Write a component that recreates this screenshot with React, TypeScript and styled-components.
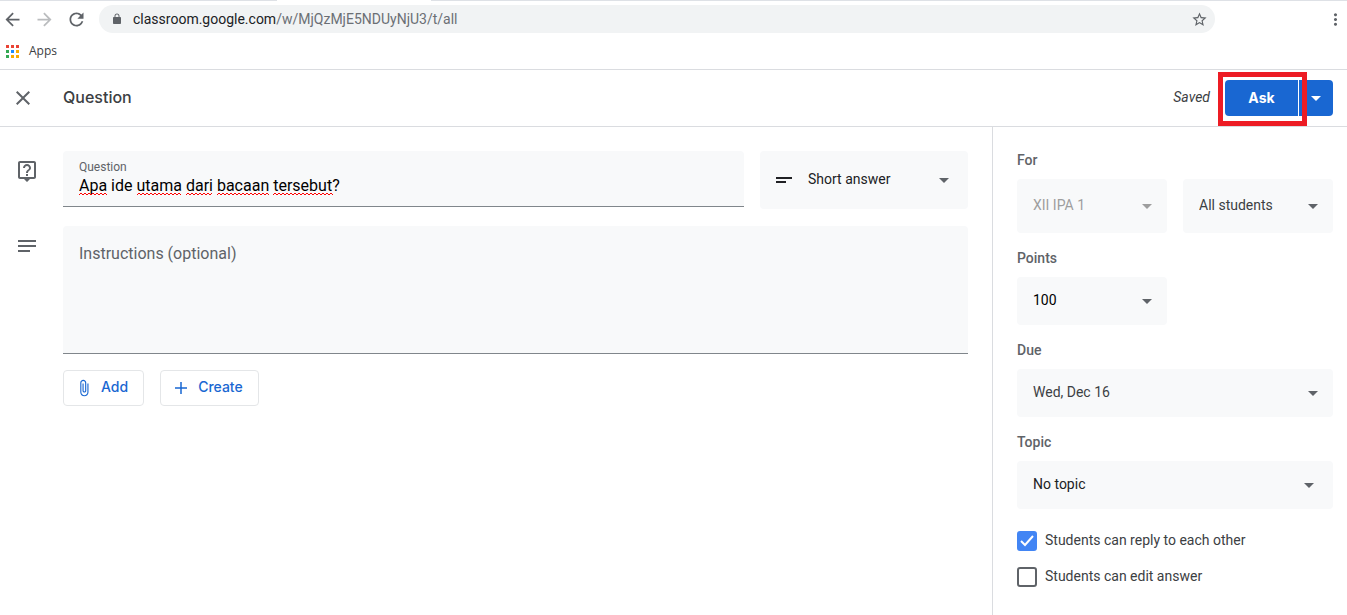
import React, { useState } from "react";
import styled, { createGlobalStyle } from "styled-components";

const GlobalStyle = createGlobalStyle`
  *, *::before, *::after { box-sizing: border-box; }
  body {
    margin: 0;
    background: #fff;
    color: #3c4043;
    font: 14px/20px Roboto, sans-serif;
  }
  button, input, select, textarea { font: inherit; color: inherit; }
`;

const display = `Inter, "Open Sans", sans-serif`;
const system = `"Open Sans", "Noto Sans", sans-serif`;

const Page = styled.div`
  display: flex;
  flex-direction: column;
  min-height: 100vh;
`;

/* Browser chrome */

const TabStrip = styled.div`
  display: flex;
  gap: 154px;
  height: 1px;
`;

const StripEdge = styled.div<{ $grow?: boolean }>`
  flex: ${(p) => (p.$grow ? "1" : "0 0 277px")};
  background: #dee1e6;
`;

const Toolbar = styled.nav`
  display: flex;
  align-items: center;
  gap: 8px;
  padding: 4px 0 0;
`;

const IconButton = styled.button`
  display: flex;
  align-items: center;
  justify-content: center;
  width: 24px;
  height: 24px;
  padding: 0;
  border: 0;
  background: none;
  color: #5f6368;

  &:disabled { color: #babcbe; }
`;

const AddressBar = styled.div`
  flex: 1;
  display: flex;
  align-items: center;
  height: 28px;
  margin: 0 100px 0 3px;
  padding: 0 4px 0 12px;
  border-radius: 14px;
  background: #f1f3f4;
  color: #5f6368;
`;

const Address = styled.div`
  flex: 1;
  padding-left: 10px;
  font: 14px/20px Roboto, sans-serif;
  color: #6b6f74;

  span { color: #202124; }
`;

const Bookmarks = styled.div`
  display: flex;
  align-items: center;
  height: 37px;
  padding: 0 6px;
  border-bottom: 1px solid #dadce0;
`;

const Bookmark = styled.a`
  display: flex;
  align-items: center;
  gap: 10px;
  color: #3c4043;
  font: 12px/16px ${system};
  text-decoration: none;
`;

/* Dialog header */

const Header = styled.header`
  display: flex;
  align-items: center;
  height: 57px;
  padding: 0 14px 0 11px;
  border-bottom: 1px solid #dadce0;
`;

const Title = styled.h1`
  flex: 1;
  margin: 0 0 0 28px;
  padding-bottom: 2px;
  font: 500 16px/24px ${display};
  color: #3c4043;
`;

const Saved = styled.em`
  margin-right: 15px;
  padding-bottom: 2px;
`;

const SplitButton = styled.div`
  display: flex;
  gap: 1px;
`;

const Highlighted = styled.div`
  position: relative;

  &::after {
    content: "";
    position: absolute;
    inset: -8px -9px -10px -7px;
    border: 5px solid #ed1c24;
    pointer-events: none;
  }
`;

const PrimaryButton = styled.button<{ $side: "left" | "right" }>`
  display: flex;
  align-items: center;
  justify-content: center;
  width: ${(p) => (p.$side === "left" ? "73px" : "34px")};
  height: 36px;
  padding: 0;
  border: 0;
  border-radius: ${(p) => (p.$side === "left" ? "4px 0 0 4px" : "0 4px 4px 0")};
  background: #1967d2;
  color: #fff;
  font: 700 14px/20px ${display};
`;

/* Body */

const Body = styled.div`
  flex: 1;
  display: flex;
`;

const Editor = styled.main`
  flex: 1;
  display: flex;
  flex-direction: column;
  padding: 24px 24px 24px 15px;
`;

const EditorRow = styled.div`
  display: flex;
  align-items: flex-start;
  gap: 24px;

  & + & { margin-top: 17px; }
`;

const RowIcon = styled.div`
  display: flex;
  padding-top: 8px;
  color: #5f6368;
`;

const RowFields = styled.div`
  flex: 1;
  display: flex;
  align-items: flex-start;
  gap: 16px;
`;

const QuestionField = styled.div`
  flex: 1;
  display: flex;
  flex-direction: column;
  height: 56px;
  padding: 9px 16px 0;
  border-bottom: 1px solid #80868b;
  border-radius: 4px 4px 0 0;
  background: #f8f9fa;

  label { font-size: 12px; line-height: 14px; color: #5f6368; }
`;

const QuestionInput = styled.div`
  position: relative;

  input {
    display: block;
    width: 100%;
    height: 22px;
    padding: 0;
    border: 0;
    outline: 0;
    background: none;
    color: #000;
    font-size: 16px;
  }

  svg {
    position: absolute;
    left: 0;
    bottom: 0;
    pointer-events: none;
  }
`;

const Instructions = styled.textarea`
  flex: 1;
  height: 128px;
  padding: 18px 16px;
  border: 0;
  border-bottom: 1px solid #80868b;
  border-radius: 4px 4px 0 0;
  outline: 0;
  background: #f8f9fa;
  font-size: 16px;
  resize: none;

  &::placeholder { color: #5f6368; opacity: 1; }
`;

const Actions = styled.div`
  display: flex;
  gap: 16px;
  margin-top: 16px;
  padding-left: 48px;
`;

const OutlineButton = styled.button`
  display: flex;
  align-items: center;
  gap: 8px;
  height: 36px;
  padding: 0 15px 0 11px;
  border: 1px solid #e4e6e8;
  border-radius: 4px;
  background: #fff;
  color: #1967d2;
  font: 500 14px/20px ${display};

  span { padding-bottom: 2px; }
`;

/* Drop-downs */

const SelectBox = styled.div<{ $height: number; $width?: number }>`
  position: relative;
  display: flex;
  align-items: center;
  flex: ${(p) => (p.$width ? `0 0 ${p.$width}px` : "1")};
  height: ${(p) => p.$height}px;
  border-radius: 4px;
  background: #f8f9fa;
`;

const NativeSelect = styled.select<{ $tone: string; $indent: number }>`
  appearance: none;
  width: 100%;
  height: 100%;
  padding: 0 32px 2px ${(p) => p.$indent}px;
  border: 0;
  border-radius: 4px;
  background: none;
  color: ${(p) => p.$tone};

  &:disabled { opacity: 1; }
`;

const SelectArrow = styled.svg<{ $right: number }>`
  position: absolute;
  right: ${(p) => p.$right}px;
  pointer-events: none;
`;

const SelectIcon = styled.svg`
  position: absolute;
  left: 16px;
  pointer-events: none;
`;

/* Settings */

const Settings = styled.aside`
  flex: 0 0 355px;
  padding: 22px 14px 22px 24px;
  border-left: 1px solid #dadce0;
`;

const Setting = styled.div`
  display: flex;
  flex-direction: column;
  gap: 8px;
  margin-bottom: 14px;
`;

const SettingLabel = styled.label`
  font-weight: 500;
  line-height: 22px;
  color: #5f6368;
`;

const SettingFields = styled.div`
  display: flex;
  gap: 16px;
`;

const Options = styled.div`
  display: flex;
  flex-direction: column;
  gap: 16px;
  padding-top: 8px;
`;

const Option = styled.label`
  position: relative;
  display: flex;
  gap: 8px;
  line-height: 18px;
  color: #3c4043;

  input {
    appearance: none;
    width: 20px;
    height: 20px;
    margin: 0;
    border: 2px solid #5f6368;
    border-radius: 3px;
  }

  input:checked { border-color: #4285f4; background: #4285f4; }

  svg { position: absolute; left: 0; top: 0; pointer-events: none; }
`;

function Icon({ d, size = 24 }: { d: string; size?: number }) {
  return (
    <svg width={size} height={size} viewBox="0 0 24 24" fill="currentColor" aria-hidden="true">
      <path d={d} />
    </svg>
  );
}

const paths = {
  back: "M20 11H7.83l5.59-5.59L12 4l-8 8 8 8 1.41-1.41L7.83 13H20v-2z",
  forward: "M12 4l-1.41 1.41L16.17 11H4v2h12.17l-5.58 5.59L12 20l8-8z",
  reload:
    "M17.65 6.35C16.2 4.9 14.21 4 12 4c-4.42 0-7.99 3.58-7.99 8s3.57 8 7.99 8c3.73 0 6.84-2.55 7.73-6h-2.08c-.82 2.33-3.04 4-5.65 4-3.31 0-6-2.69-6-6s2.69-6 6-6c1.66 0 3.14.69 4.22 1.78L13 11h7V4l-2.35 2.35z",
  lock: "M18 8h-1V6c0-2.76-2.24-5-5-5S7 3.24 7 6v2H6c-1.1 0-2 .9-2 2v10c0 1.1.9 2 2 2h12c1.1 0 2-.9 2-2V10c0-1.1-.9-2-2-2zM8.9 6c0-1.71 1.39-3.1 3.1-3.1s3.1 1.39 3.1 3.1v2H8.9z",
  star: "M22 9.24l-7.19-.62L12 2 9.19 8.63 2 9.24l5.46 4.73L5.82 21 12 17.27 18.18 21l-1.63-7.03L22 9.24zM12 15.4l-3.76 2.27 1-4.28-3.32-2.88 4.38-.38L12 6.1l1.71 4.04 4.38.38-3.32 2.88 1 4.28L12 15.4z",
  more: "M12 8c1.1 0 2-.9 2-2s-.9-2-2-2-2 .9-2 2 .9 2 2 2zm0 2c-1.1 0-2 .9-2 2s.9 2 2 2 2-.9 2-2-.9-2-2-2zm0 6c-1.1 0-2 .9-2 2s.9 2 2 2 2-.9 2-2-.9-2-2-2z",
  close: "M19 6.41L17.59 5 12 10.59 6.41 5 5 6.41 10.59 12 5 17.59 6.41 19 12 13.41 17.59 19 19 17.59 13.41 12z",
  help: "M19 2H5c-1.11 0-2 .9-2 2v14c0 1.1.89 2 2 2h4l3 3 3-3h4c1.1 0 2-.9 2-2V4c0-1.1-.9-2-2-2zm0 16H5V4h14v14zm-8-3h2v2h-2zm1-8c1.1 0 2 .9 2 2 0 2-3 1.75-3 5h2c0-2.25 3-2.5 3-5 0-2.21-1.79-4-4-4s-4 1.79-4 4h2c0-1.1.9-2 2-2z",
  notes: "M3 6h18v2H3zM3 11h18v2H3zM3 16h12v2H3z",
  clip: "M16.5 6v11.5c0 2.21-1.79 4-4 4s-4-1.79-4-4V5c0-1.38 1.12-2.5 2.5-2.5s2.5 1.12 2.5 2.5v10.5c0 .55-.45 1-1 1s-1-.45-1-1V6H10v9.5c0 1.38 1.12 2.5 2.5 2.5s2.5-1.12 2.5-2.5V5c0-2.21-1.79-4-4-4S7 2.79 7 5v12.5c0 3.04 2.46 5.5 5.5 5.5s5.5-2.46 5.5-5.5V6h-1.5z",
  plus: "M20 13h-7v7h-2v-7H4v-2h7V4h2v7h7z",
};

const appColors = ["#ea4335", "#ea4335", "#ea4335", "#34a853", "#1a8cff", "#f9ab00", "#34a853", "#f9ab00", "#f9ab00"];

function AppsGrid() {
  return (
    <svg width="13" height="13" aria-hidden="true">
      {appColors.map((fill, i) => (
        <rect key={i} x={(i % 3) * 5} y={Math.floor(i / 3) * 5} width="3" height="3" fill={fill} />
      ))}
    </svg>
  );
}

/* Start and end of each misspelled word in the question */
const misspelled = [[0, 28], [58, 102], [107, 133], [138, 190], [194, 254]];

function Squiggles() {
  const d = misspelled
    .map(([from, to]) => {
      let path = `M${from} 3`;
      for (let x = from + 2, up = true; x <= to; x += 2, up = !up) path += `L${x} ${up ? 1 : 3}`;
      return path;
    })
    .join("");
  return (
    <svg width="260" height="4" aria-hidden="true">
      <path d={d} fill="none" stroke="#f00" />
    </svg>
  );
}

type DropdownProps = {
  id: string;
  value: string;
  height?: number;
  width?: number;
  tone?: string;
  arrowRight?: number;
  indent?: number;
  disabled?: boolean;
  label?: string;
  children?: React.ReactNode;
};

function Dropdown({
  id, value, height = 48, width, tone = "#3c4043", arrowRight = 15, indent = 16, disabled, label, children,
}: DropdownProps) {
  return (
    <SelectBox $height={height} $width={width}>
      {children}
      <NativeSelect id={id} aria-label={label} disabled={disabled} $tone={tone} $indent={indent}>
        <option>{value}</option>
      </NativeSelect>
      <SelectArrow width="10" height="5" $right={arrowRight} aria-hidden="true">
        <path d="M0 0h10L5 5z" fill={disabled ? "#9e9e9e" : "#5f6368"} />
      </SelectArrow>
    </SelectBox>
  );
}

function CheckOption({ label, initial = false }: { label: string; initial?: boolean }) {
  const [checked, setChecked] = useState(initial);
  return (
    <Option>
      <input type="checkbox" checked={checked} onChange={(e) => setChecked(e.target.checked)} />
      {checked && (
        <svg width="20" height="20" aria-hidden="true">
          <path d="M4 10l4 4 8-9" fill="none" stroke="#fff" strokeWidth="2" />
        </svg>
      )}
      {label}
    </Option>
  );
}

export default function App() {
  const [question, setQuestion] = useState("Apa ide utama dari bacaan tersebut?");
  return (
    <Page>
      <GlobalStyle />
      <TabStrip>
        <StripEdge />
        <StripEdge $grow />
      </TabStrip>
      <Toolbar>
        <IconButton aria-label="Back"><Icon d={paths.back} size={21} /></IconButton>
        <IconButton aria-label="Forward" disabled><Icon d={paths.forward} size={21} /></IconButton>
        <IconButton aria-label="Reload"><Icon d={paths.reload} size={21} /></IconButton>
        <AddressBar>
          <Icon d={paths.lock} size={12} />
          <Address><span>classroom.google.com</span>/w/MjQzMjE5NDUyNjU3/t/all</Address>
          <IconButton aria-label="Bookmark this page"><Icon d={paths.star} size={17} /></IconButton>
        </AddressBar>
        <IconButton aria-label="Menu"><Icon d={paths.more} size={19} /></IconButton>
      </Toolbar>
      <Bookmarks>
        <Bookmark href="#apps"><AppsGrid />Apps</Bookmark>
      </Bookmarks>

      <Header>
        <IconButton aria-label="Close"><Icon d={paths.close} /></IconButton>
        <Title>Question</Title>
        <Saved>Saved</Saved>
        <SplitButton>
          <Highlighted>
            <PrimaryButton $side="left">Ask</PrimaryButton>
          </Highlighted>
          <PrimaryButton $side="right" aria-label="More options">
            <svg width="10" height="5" aria-hidden="true"><path d="M0 0h10L5 5z" fill="#fff" /></svg>
          </PrimaryButton>
        </SplitButton>
      </Header>

      <Body>
        <Editor>
          <EditorRow>
            <RowIcon><Icon d={paths.help} /></RowIcon>
            <RowFields>
              <QuestionField>
                <label htmlFor="question">Question</label>
                <QuestionInput>
                  <input
                    id="question"
                    type="text"
                    spellCheck={false}
                    value={question}
                    onChange={(e) => setQuestion(e.target.value)}
                  />
                  <Squiggles />
                </QuestionInput>
              </QuestionField>
              <Dropdown id="kind" label="Question type" value="Short answer" height={58} width={208} indent={48} arrowRight={19} tone="#202124">
                <SelectIcon width="16" height="6" aria-hidden="true">
                  <path d="M0 0h16v2H0zM0 4h10v2H0z" fill="#202124" />
                </SelectIcon>
              </Dropdown>
            </RowFields>
          </EditorRow>
          <EditorRow>
            <RowIcon><Icon d={paths.notes} /></RowIcon>
            <RowFields>
              <Instructions aria-label="Instructions" placeholder="Instructions (optional)" />
            </RowFields>
          </EditorRow>
          <Actions>
            <OutlineButton><Icon d={paths.clip} size={18} /><span>Add</span></OutlineButton>
            <OutlineButton><Icon d={paths.plus} size={18} /><span>Create</span></OutlineButton>
          </Actions>
        </Editor>

        <Settings>
          <Setting>
            <SettingLabel htmlFor="class">For</SettingLabel>
            <SettingFields>
              <Dropdown id="class" value="XII IPA 1" height={54} tone="#9e9e9e" disabled />
              <Dropdown id="students" label="Students" value="All students" height={54} />
            </SettingFields>
          </Setting>
          <Setting>
            <SettingLabel htmlFor="points">Points</SettingLabel>
            <SettingFields>
              <Dropdown id="points" value="100" width={150} tone="#000" />
            </SettingFields>
          </Setting>
          <Setting>
            <SettingLabel htmlFor="due">Due</SettingLabel>
            <SettingFields>
              <Dropdown id="due" value="Wed, Dec 16" />
            </SettingFields>
          </Setting>
          <Setting>
            <SettingLabel htmlFor="topic">Topic</SettingLabel>
            <SettingFields>
              <Dropdown id="topic" value="No topic" tone="#202124" arrowRight={19} />
            </SettingFields>
          </Setting>
          <Options>
            <CheckOption label="Students can reply to each other" initial />
            <CheckOption label="Students can edit answer" />
          </Options>
        </Settings>
      </Body>
    </Page>
  );
}
